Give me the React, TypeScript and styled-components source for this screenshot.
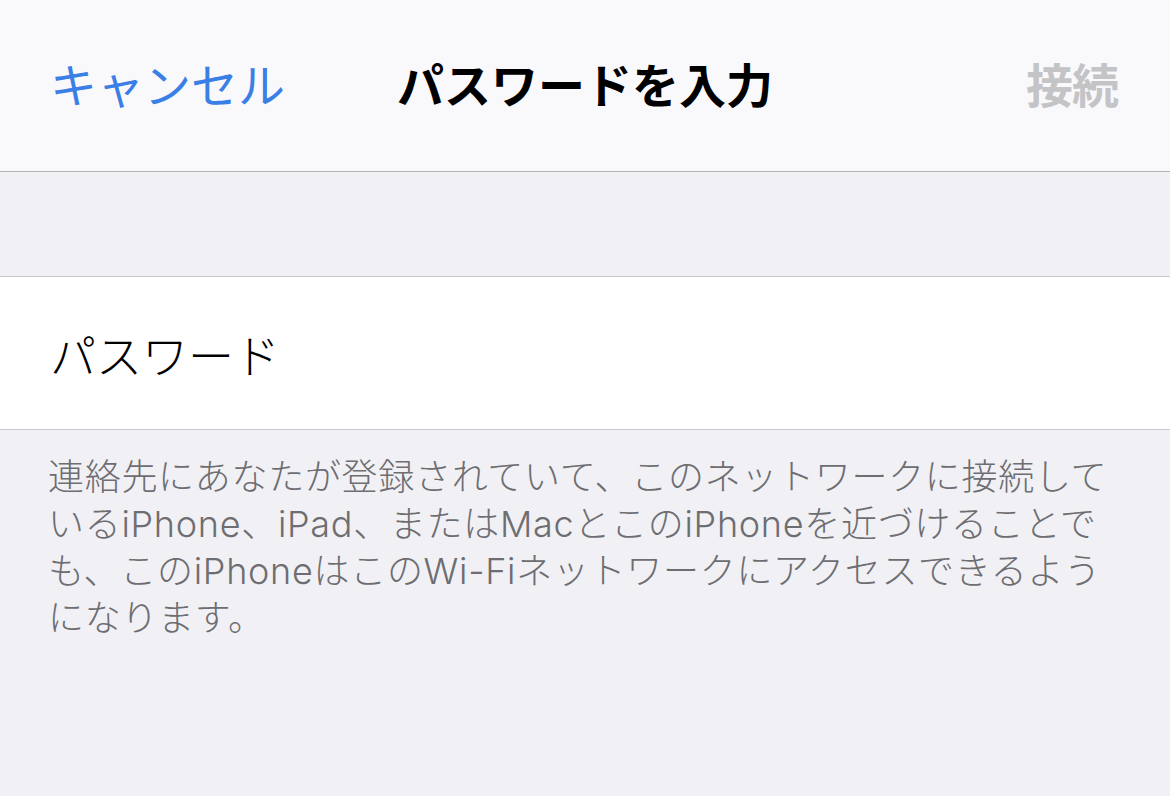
import React from 'react';
import styled, { createGlobalStyle } from 'styled-components';

const colors = {
  navBg: '#f9f9fb',
  groupBg: '#f1f1f5',
  cell: '#ffffff',
  hairline: '#b4b4b8',
  separator: '#c8c7cc',
  blue: '#3a7fe6',
  disabled: '#c4c4c7',
  label: '#000000',
  footnote: '#6d6d72',
};

const GlobalStyle = createGlobalStyle`
  html, body {
    margin: 0;
    padding: 0;
    background: ${colors.groupBg};
  }
  body {
    font-family: "Inter", "Noto Sans CJK JP", sans-serif;
    -webkit-font-smoothing: antialiased;
  }
`;

const footerLines = [
  '連絡先にあなたが登録されていて、このネットワークに接続して',
  'いるiPhone、iPad、またはMacとこのiPhoneを近づけることで',
  'も、このiPhoneはこのWi-Fiネットワークにアクセスできるよう',
  'になります。',
];

function App() {
  return (
    <>
      <GlobalStyle />
      <Screen>
        <NavBar>
          <NavButton>キャンセル</NavButton>
          <NavTitle>パスワードを入力</NavTitle>
          <NavButton $align="end" $disabled>
            接続
          </NavButton>
        </NavBar>
        <SectionGap />
        <Cell>
          <CellLabel>パスワード</CellLabel>
        </Cell>
        <Footnote>
          {footerLines.map((line) => (
            <FootnoteLine key={line}>{line}</FootnoteLine>
          ))}
        </Footnote>
      </Screen>
    </>
  );
}

export default App;

const Screen = styled.div`
  width: 1170px;
  height: 796px;
  background: ${colors.groupBg};
  display: flex;
  flex-direction: column;
  overflow: hidden;
`;

const NavBar = styled.header`
  height: 172px;
  padding: 0 50px 6px;
  box-sizing: border-box;
  background: ${colors.navBg};
  border-bottom: 1px solid ${colors.hairline};
  display: grid;
  grid-template-columns: 1fr auto 1fr;
  align-items: center;
  flex-shrink: 0;
`;

const NavButton = styled.span<{ $align?: 'start' | 'end'; $disabled?: boolean }>`
  justify-self: ${({ $align }) => $align ?? 'start'};
  font-family: "Noto Sans CJK JP", sans-serif;
  font-size: 47px;
  font-weight: ${({ $disabled }) => ($disabled ? 700 : 400)};
  color: ${({ $disabled }) => ($disabled ? colors.disabled : colors.blue)};
  letter-spacing: ${({ $disabled }) => ($disabled ? '-1px' : '0')};
  ${({ $align }) => ($align === 'end' ? 'margin-right: 2px;' : '')}
`;

const NavTitle = styled.h1`
  margin: 0;
  font-family: "Noto Sans CJK JP", sans-serif;
  font-size: 47px;
  font-weight: 700;
  color: ${colors.label};
`;

const SectionGap = styled.div`
  height: 104px;
  border-bottom: 1px solid ${colors.separator};
  flex-shrink: 0;
`;

const Cell = styled.div`
  height: 153px;
  padding: 0 50px;
  box-sizing: border-box;
  background: ${colors.cell};
  border-bottom: 1px solid ${colors.separator};
  display: flex;
  align-items: center;
  flex-shrink: 0;
`;

const CellLabel = styled.span`
  font-family: "Noto Sans CJK JP", sans-serif;
  font-size: 46px;
  font-weight: 300;
  color: ${colors.label};
`;

const Footnote = styled.div`
  padding: 24px 48px 0;
  display: flex;
  flex-direction: column;
  color: ${colors.footnote};
  font-size: 36px;
  font-weight: 300;
  line-height: 47px;
  letter-spacing: 0.7px;
`;

const FootnoteLine = styled.span`
  white-space: nowrap;
`;
